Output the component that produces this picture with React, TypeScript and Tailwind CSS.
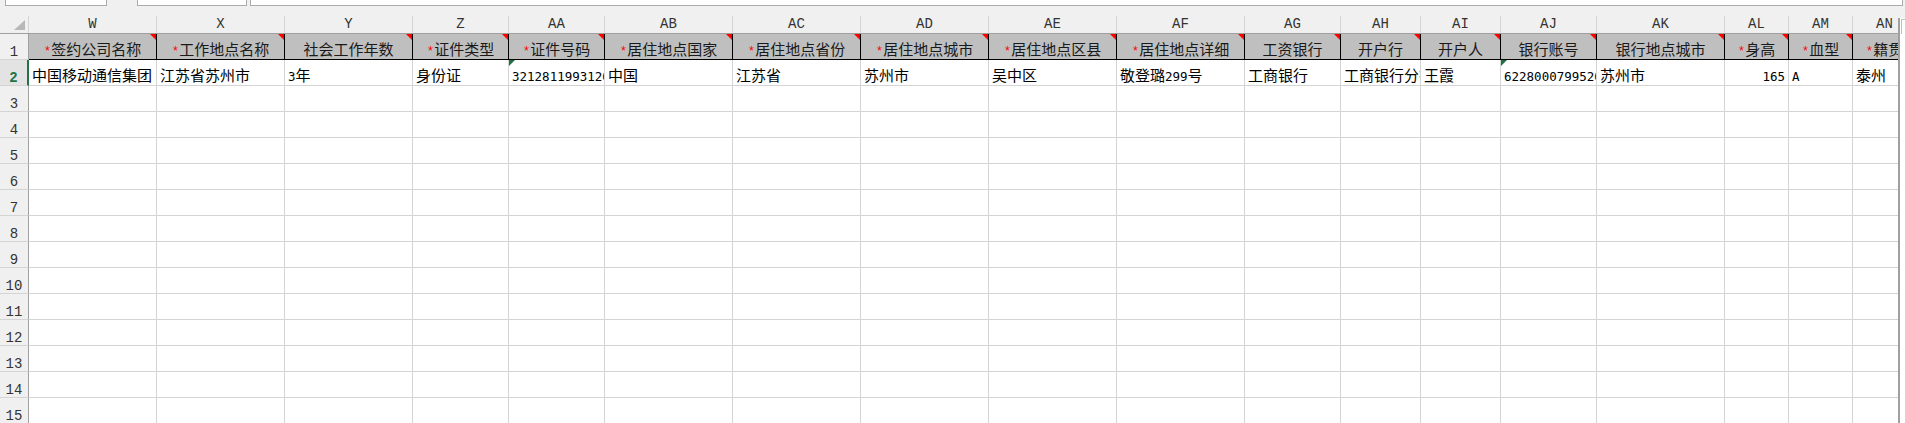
type Col = {
  key: string;
  w: string;
  head: string;
  req: boolean;
  val: string;
  right?: boolean;
  flag?: boolean;
};

const cols: Col[] = [
  { key: 'W', w: 'w-[128px]', head: '签约公司名称', req: true, val: '中国移动通信集团' },
  { key: 'X', w: 'w-[128px]', head: '工作地点名称', req: true, val: '江苏省苏州市' },
  { key: 'Y', w: 'w-[128px]', head: '社会工作年数', req: false, val: '3年' },
  { key: 'Z', w: 'w-[96px]', head: '证件类型', req: true, val: '身份证' },
  { key: 'AA', w: 'w-[96px]', head: '证件号码', req: true, val: '3212811993120', flag: true },
  { key: 'AB', w: 'w-[128px]', head: '居住地点国家', req: true, val: '中国' },
  { key: 'AC', w: 'w-[128px]', head: '居住地点省份', req: true, val: '江苏省' },
  { key: 'AD', w: 'w-[128px]', head: '居住地点城市', req: true, val: '苏州市' },
  { key: 'AE', w: 'w-[128px]', head: '居住地点区县', req: true, val: '吴中区' },
  { key: 'AF', w: 'w-[128px]', head: '居住地点详细', req: true, val: '敬登璐299号' },
  { key: 'AG', w: 'w-[96px]', head: '工资银行', req: false, val: '工商银行' },
  { key: 'AH', w: 'w-[80px]', head: '开户行', req: false, val: '工商银行分行' },
  { key: 'AI', w: 'w-[80px]', head: '开户人', req: false, val: '王霞' },
  { key: 'AJ', w: 'w-[96px]', head: '银行账号', req: false, val: '6228000799520', flag: true },
  { key: 'AK', w: 'w-[128px]', head: '银行地点城市', req: false, val: '苏州市' },
  { key: 'AL', w: 'w-[64px]', head: '身高', req: true, val: '165', right: true },
  { key: 'AM', w: 'w-[64px]', head: '血型', req: true, val: 'A' },
  { key: 'AN', w: 'w-[64px]', head: '籍贯', req: true, val: '泰州' },
];

const rows = [3, 4, 5, 6, 7, 8, 9, 10, 11, 12, 13, 14, 15];

// latin runs get a narrow mono face, like the half-width glyphs in the sheet
function Txt({ s }: { s: string }) {
  const parts = s.split(/([\x20-\x7e]+)/).filter(Boolean);
  return (
    <span>
      {parts.map((p, i) =>
        /^[\x20-\x7e]+$/.test(p) ? (
          <span key={i} className="[font-family:'DejaVu_Sans_Mono',monospace] text-[12.5px] leading-[0px]">
            {p}
          </span>
        ) : (
          <span key={i}>{p}</span>
        )
      )}
    </span>
  );
}

function RowHead({ n, active }: { n: number; active?: boolean }) {
  return (
    <div
      className={`w-[29px] shrink-0 flex items-end justify-center border-b border-b-[#d4d4d4] [font-family:'Liberation_Mono',monospace] text-[14px] leading-[13px] ${
        active
          ? 'bg-[#e3e3e3] border-r-2 border-r-[#217346] text-[#217346] font-bold'
          : 'bg-[#f0f0f0] border-r border-r-[#a0a0a0] text-[#333]'
      }`}
    >
      {n}
    </div>
  );
}

export default function App() {
  return (
    <div className="w-[1905px] h-[423px] overflow-hidden bg-[#f0f0f0] [font-family:'Noto_Sans_CJK_SC',sans-serif] text-[15px] text-black">
      {/* formula bar bottoms */}
      <div className="h-[16px] flex items-start">
        <div className="ml-[5px] w-[102px] h-[6px] bg-white border-x border-b border-[#ababab]" />
        <div className="ml-[30px] w-[110px] h-[6px] bg-white border-x border-b border-[#ababab]" />
        <div className="ml-[3px] flex-1 mr-[2px] h-[6px] bg-white border-x border-b border-[#ababab]" />
      </div>

      <div className="flex">
        <div className="w-[1898px] overflow-hidden shrink-0">
          {/* column letters */}
          <div className="flex h-[18px] border-b border-[#a0a0a0]">
            <div className="w-[29px] shrink-0 border-r border-[#d4d4d4] flex items-end justify-end pr-[3px] pb-[3px]">
              <svg width="11" height="10" viewBox="0 0 11 10">
                <polygon points="11,0 11,10 0,10" fill="#b8b8b8" />
              </svg>
            </div>
            {cols.map((c) => (
              <div
                key={c.key}
                className={`${c.w} shrink-0 border-r border-[#d4d4d4] flex items-end justify-center pb-[2px] [font-family:'Liberation_Mono',monospace] text-[14px] leading-[13px] text-[#333]`}
              >
                {c.key}
              </div>
            ))}
          </div>

          {/* row 1: headers */}
          <div className="flex h-[26px]">
            <RowHead n={1} />
            {cols.map((c) => (
              <div
                key={c.key}
                className={`${c.w} shrink-0 relative bg-[#bfbfbf] border-r border-b border-black flex items-end justify-center pb-[3px] leading-[15px] overflow-hidden whitespace-nowrap text-[#1a1a1a]`}
              >
                <span>
                  {c.req && (
                    <span className="[font-family:'Liberation_Mono',monospace] text-[12.5px] leading-[0px] text-[#ff0000]">*</span>
                  )}
                  {c.head}
                </span>
                <div className="absolute top-0 right-0 w-[6px] h-[6px] bg-[#ff0000] [clip-path:polygon(0_0,100%_0,100%_100%)]" />
              </div>
            ))}
          </div>

          {/* row 2: data */}
          <div className="flex h-[26px]">
            <RowHead n={2} active />
            {cols.map((c) => (
              <div
                key={c.key}
                className={`${c.w} shrink-0 relative bg-white border-r border-b border-[#d4d4d4] flex items-end px-[3px] pb-[3px] leading-[15px] overflow-hidden whitespace-nowrap ${
                  c.right ? 'justify-end' : 'justify-start'
                }`}
              >
                <Txt s={c.val} />
                {c.flag && (
                  <div className="absolute top-0 left-0 w-[6px] h-[6px] bg-[#1e7145] [clip-path:polygon(0_0,100%_0,0_100%)]" />
                )}
              </div>
            ))}
          </div>

          {rows.map((n) => (
            <div key={n} className="flex h-[26px]">
              <RowHead n={n} />
              {cols.map((c) => (
                <div key={c.key} className={`${c.w} shrink-0 bg-white border-r border-b border-[#d4d4d4]`} />
              ))}
            </div>
          ))}
        </div>

        {/* edge of the sheet window */}
        <div className="flex-1 bg-white border-l-2 border-[#a0a0a0] mt-[2px]">
          <div className="mt-[1px] ml-[1px] h-[15px] border-l border-t border-[#c0c0c0]" />
        </div>
      </div>
    </div>
  );
}
